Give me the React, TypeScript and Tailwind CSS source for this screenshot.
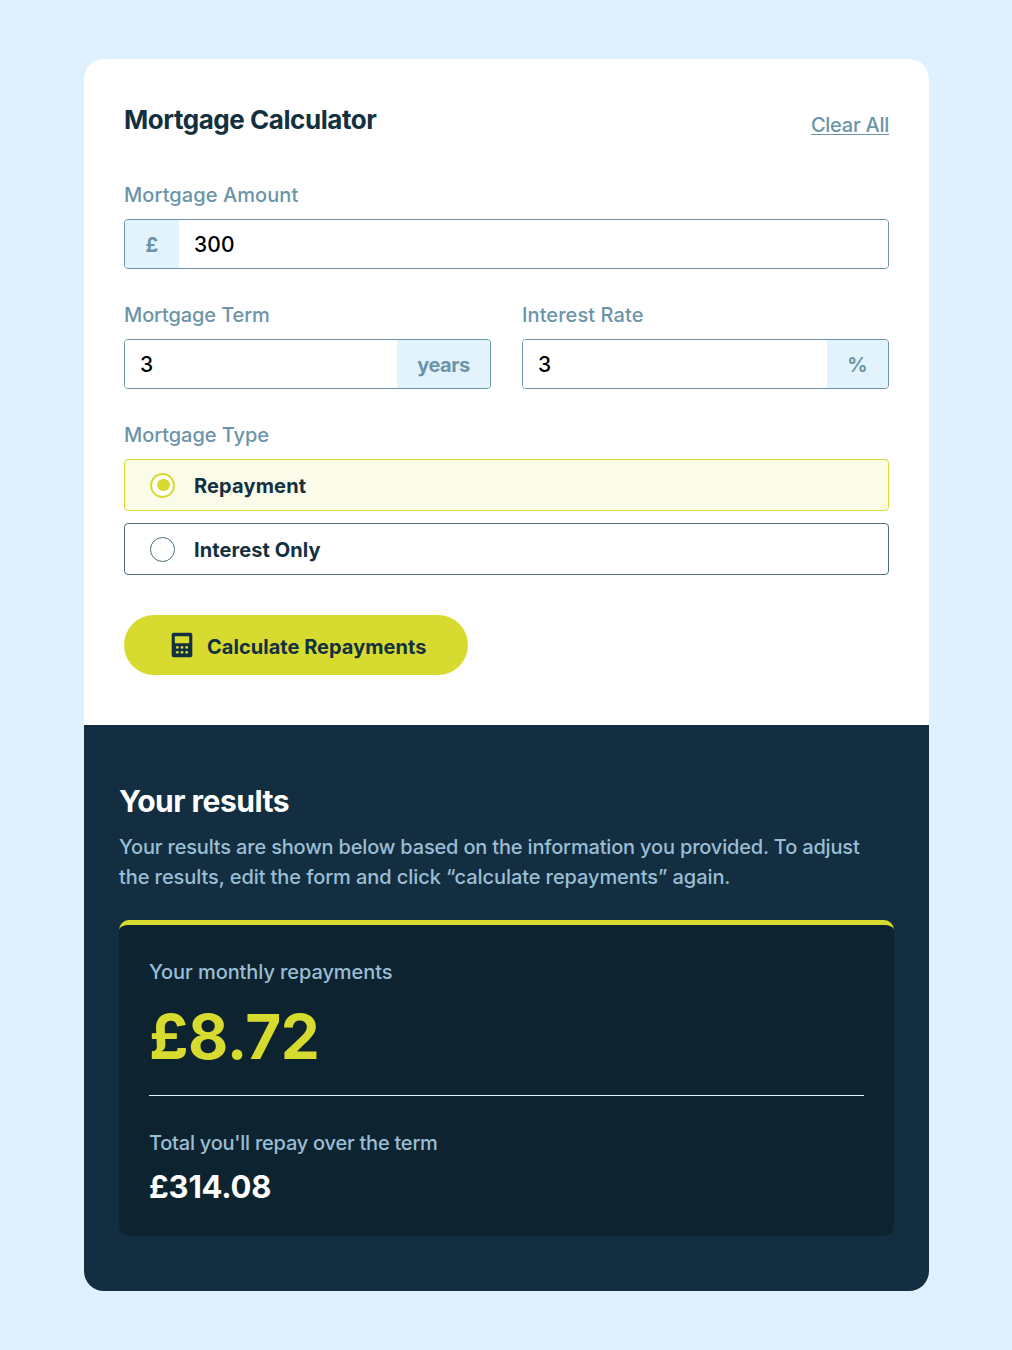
import React, { useState } from "react";

function CalculatorIcon() {
  return (
    <svg viewBox="0 0 24 24" className="size-[30px] shrink-0" aria-hidden="true">
      <path
        fill="#133041"
        fillRule="evenodd"
        d="M18.75 2.25H5.25a1.5 1.5 0 0 0-1.5 1.5v16.5a1.5 1.5 0 0 0 1.5 1.5h13.5a1.5 1.5 0 0 0 1.5-1.5V3.75a1.5 1.5 0 0 0-1.5-1.5ZM6.75 4.9h10.5a.5.5 0 0 1 .5.5v4.7a.5.5 0 0 1-.5.5H6.75a.5.5 0 0 1-.5-.5V5.4a.5.5 0 0 1 .5-.5Z"
      />
      {[8.25, 12, 15.75].map((x) =>
        [13.9, 17.8].map((y) => <circle key={`${x}-${y}`} cx={x} cy={y} r="1.1" fill="#d8db2f" />),
      )}
    </svg>
  );
}

function Field({
  label,
  value,
  unit,
  leading,
  labelClass,
  unitClass,
}: {
  label: string;
  value: string;
  unit: string;
  leading?: boolean;
  labelClass: string;
  unitClass: string;
}) {
  const [text, setText] = useState(value);
  const badge = (
    <span className={`flex shrink-0 items-center justify-center bg-[#e2f3fb] pt-px font-bold text-[#6b94a8] ${unitClass}`}>
      {unit}
    </span>
  );
  return (
    <label className="block min-w-0">
      <span className={`block h-[31px] leading-[30px] font-medium whitespace-nowrap text-[#6b94a8] ${labelClass}`}>
        {label}
      </span>
      <span className="mt-[9px] flex h-[50px] overflow-hidden rounded-[4px] border border-[#6b94a8]">
        {leading && badge}
        <input
          value={text}
          onChange={(e) => setText(e.target.value)}
          className="min-w-0 flex-1 bg-white px-[15px] pt-[2px] text-[21px] font-medium tracking-[0.2px] text-black outline-none"
        />
        {!leading && badge}
      </span>
    </label>
  );
}

function Option({
  label,
  selected,
  onSelect,
  textClass,
}: {
  label: string;
  selected: boolean;
  onSelect: () => void;
  textClass: string;
}) {
  return (
    <button
      type="button"
      role="radio"
      aria-checked={selected}
      onClick={onSelect}
      className={`flex h-[52px] w-full items-center rounded-[4px] border pl-[25px] text-left ${
        selected ? "border-[#d8db2f] bg-[#fbfbe9]" : "border-[#4e6e7e] bg-white"
      }`}
    >
      <span
        className={`flex size-[25px] items-center justify-center rounded-full bg-white ${
          selected ? "border-2 border-[#d8db2f]" : "border border-[#4e6e7e]"
        }`}
      >
        {selected && <span className="ml-[2px] h-[12px] w-[13px] rounded-full bg-[#d8db2f]" />}
      </span>
      <span className={`ml-[19px] font-bold whitespace-nowrap text-[#133041] ${textClass}`}>{label}</span>
    </button>
  );
}

export default function App() {
  const [type, setType] = useState("repayment");
  return (
    <div className="h-[1350px] bg-[#dff1fe] pt-[59px] pl-[84px] font-['Inter',sans-serif] text-[20px]">
      <main className="w-[845px]">
        <section className="h-[666px] rounded-t-[20px] bg-white px-10 pt-10">
          <header className="flex items-start justify-between">
            <h1 className="h-[41px] pt-px text-[26px] leading-[40px] font-bold tracking-[-0.45px] whitespace-nowrap text-[#133041]">
              Mortgage Calculator
            </h1>
            <button
              type="button"
              className="mt-[11px] h-[30px] leading-[30px] font-medium tracking-[-0.25px] whitespace-nowrap text-[#6b94a8] underline decoration-1 underline-offset-[2px]"
            >
              Clear All
            </button>
          </header>
          <div className="mt-[39px]">
            <Field label="Mortgage Amount" value="300" unit="£" leading labelClass="pt-px tracking-[0.08px]" unitClass="w-[54px]" />
          </div>
          <div className="mt-[30px] grid grid-cols-2 gap-[31px]">
            <Field label="Mortgage Term" value="3" unit="years" labelClass="pt-px tracking-[-0.12px]" unitClass="w-[93px] tracking-[-0.4px]" />
            <Field label="Interest Rate" value="3" unit="%" labelClass="pt-px tracking-[0.08px]" unitClass="w-[61px]" />
          </div>
          <p className="mt-[30px] h-[31px] pt-px leading-[30px] font-medium tracking-[-0.06px] text-[#6b94a8]">Mortgage Type</p>
          <div role="radiogroup" className="mt-[9px] flex flex-col gap-3">
            <Option label="Repayment" selected={type === "repayment"} onSelect={() => setType("repayment")} textClass="pt-px tracking-[0.15px]" />
            <Option label="Interest Only" selected={type === "interest"} onSelect={() => setType("interest")} textClass="pt-[2px] tracking-[0.08px]" />
          </div>
          <button
            type="button"
            className="mt-10 flex h-[60px] w-[344px] items-center gap-[10px] rounded-full bg-[#d8db2f] pl-[43px] font-bold text-[#133041]"
          >
            <CalculatorIcon />
            <span className="pt-[3px] tracking-[0.03px] whitespace-nowrap">Calculate Repayments</span>
          </button>
        </section>
        <section className="h-[566px] rounded-b-[20px] bg-[#132e40] px-[35px] pt-[56px]">
          <h2 className="h-[40px] text-[30px] leading-[40px] font-bold tracking-[-0.5px] whitespace-nowrap text-white">
            Your results
          </h2>
          <p className="mt-[11px] leading-[30px] font-medium whitespace-nowrap text-[#9abed5]">
            <span className="block tracking-[-0.175px]">
              Your results are shown below based on the information you provided. To adjust
            </span>
            <span className="block tracking-[-0.08px]">
              the results, edit the form and click “calculate repayments” again.
            </span>
          </p>
          <div className="mt-[28px] h-[316px] rounded-[10px] border-t-[5px] border-[#d8db2f] bg-[#0e2330] px-[30px] pt-[32px]">
            <p className="h-[30px] leading-[30px] font-medium tracking-[-0.08px] whitespace-nowrap text-[#9abed5]">
              Your monthly repayments
            </p>
            <p className="mt-[10px] h-[80px] text-[62px] leading-[80px] font-bold tracking-[-0.5px] whitespace-nowrap text-[#d8db2f]">
              £8.72
            </p>
            <hr className="mt-[18px] border-t border-[#e2f3fb]" />
            <p className="mt-[32px] h-[30px] leading-[30px] font-medium tracking-[-0.24px] whitespace-nowrap text-[#9abed5]">
              Total you'll repay over the term
            </p>
            <p className="mt-[9px] h-[40px] text-[31px] leading-[40px] font-bold tracking-[-0.2px] whitespace-nowrap text-white">
              £314.08
            </p>
          </div>
        </section>
      </main>
    </div>
  );
}
